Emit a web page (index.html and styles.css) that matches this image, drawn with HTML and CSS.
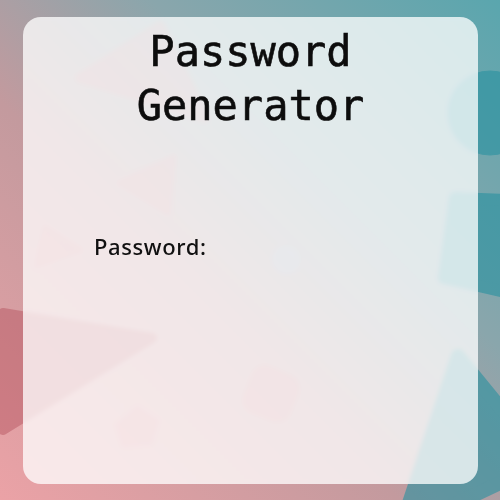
FILE: index.html
```html
<!DOCTYPE html>
<html lang="en">
<head>
<meta charset="utf-8">
<title>Password Generator</title>
<link rel="stylesheet" href="styles.css">
</head>
<body>
<svg class="bg-shapes" width="500" height="500" viewBox="0 0 500 500" aria-hidden="true">
  <g stroke-linejoin="round">
    <polygon class="pink" points="80,78 160,26 205,118" stroke-width="10"/>
    <polygon class="pink" points="120,183 174,157 168,213" stroke-width="6"/>
    <polygon class="pink" points="45,228 37,265 80,250" stroke-width="6"/>
    <circle class="blue" cx="286" cy="260" r="14"/>
    <polygon class="pink-dark" points="3,313 152,338 3,430" stroke-width="10"/>
    <polygon class="pink" points="137,408 157,421 151,443 123,446 117,425" stroke-width="4"/>
    <rect class="pink" x="246" y="369" width="50" height="50" rx="14" transform="rotate(22 271 394)"/>
    <circle class="teal" cx="490" cy="113" r="42"/>
    <polygon class="teal" points="455,198 505,200 505,292 444,278" stroke-width="12"/>
    <polygon class="teal" points="458,356 400,530 545,462" stroke-width="14"/>
  </g>
</svg>
<main class="card">
  <h1 class="title">Password Generator</h1>
  <div class="field">
    <label class="label" for="pw">Password:</label>
  </div>
</main>
</body>
</html>
```
FILE: styles.css
```css
html, body {
  margin: 0;
  padding: 0;
}
body {
  width: 500px;
  height: 500px;
  overflow: hidden;
  position: relative;
  background: linear-gradient(to top right, #eba2a6 0%, #c39a9e 40%, #8aa6ac 65%, #5aa6ae 100%);
  padding: 17px 22px 16px 23px;
  box-sizing: border-box;
}
.bg-shapes {
  position: absolute;
  left: 0;
  top: 0;
}
.pink { fill: #d67882; stroke: #d67882; opacity: 0.3; }
.pink-dark { fill: #b4505c; stroke: #b4505c; opacity: 0.45; }
.blue { fill: #96aac8; opacity: 0.35; }
.teal { fill: #2891a0; stroke: #2891a0; opacity: 0.6; }

.card {
  position: relative;
  height: 467px;
  box-sizing: border-box;
  border-radius: 18px;
  background: rgba(255, 255, 255, 0.76);
  backdrop-filter: blur(2px);
  padding: 8px 0 0 0;
  display: flex;
  flex-direction: column;
}
.title {
  margin: 0;
  text-align: center;
  font-family: "DejaVu Sans Mono", monospace;
  font-weight: normal;
  font-size: 42px;
  line-height: 54px;
  color: #0d0d0d;
  padding: 0 90px;
  -webkit-text-stroke: 0.6px #0d0d0d;
}
.field {
  margin-top: 98px;
  padding-left: 71px;
}
.label {
  font-family: "Noto Sans", sans-serif;
  font-weight: 500;
  font-size: 22px;
  letter-spacing: 0.6px;
  color: #111;
  line-height: 30px;
}
```
